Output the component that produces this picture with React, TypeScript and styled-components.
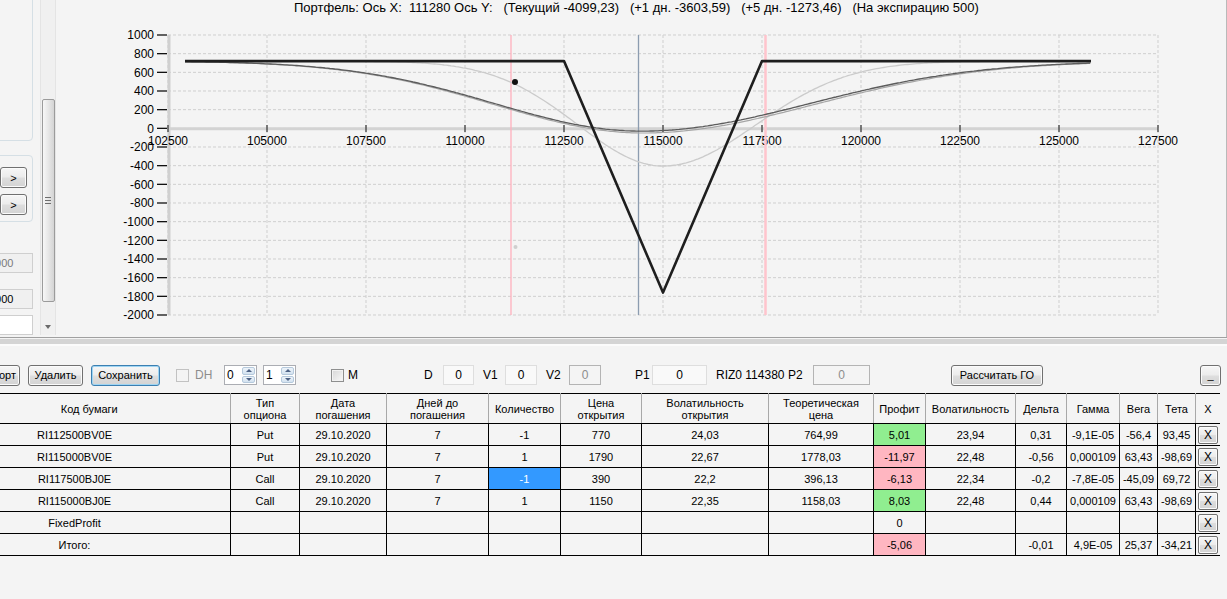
import styled, { createGlobalStyle } from "styled-components";

const GlobalStyle = createGlobalStyle`
	html, body {
		margin: 0;
		padding: 0;
		background: #f4f4f4;
	}
	body {
		font-family: "Liberation Sans", Arial, sans-serif;
		font-size: 11px;
		color: #000;
	}
	* { box-sizing: border-box; }
`;

const Window = styled.div`
	width: 1227px;
	height: 599px;
	overflow: hidden;
	display: flex;
	flex-direction: column;
	background: #f4f4f4;
`;

const TopPane = styled.div`
	display: flex;
	height: 337px;
	flex: none;
`;

const LeftPanel = styled.div`
	width: 40px;
	flex: none;
	overflow: hidden;
`;

const LeftInner = styled.div`
	width: 158px;
	margin-left: -125px;
	display: flex;
	flex-direction: column;
	align-items: flex-end;
`;

const GroupBox = styled.div<{ $top: number; $h: number }>`
	width: 100%;
	margin-top: ${(p) => p.$top}px;
	height: ${(p) => p.$h}px;
	border: 1px solid #d5dfe5;
	border-radius: 4px;
	display: flex;
	flex-direction: column;
	align-items: flex-end;
	gap: 6px;
	padding: 11px 5px 0 0;
`;

const TextBox = styled.div<{ $top: number; $bg: string; $fg: string }>`
	margin-top: ${(p) => p.$top}px;
	width: 60px;
	height: 20px;
	border: 1px solid #cfcfcf;
	background: ${(p) => p.$bg};
	color: ${(p) => p.$fg};
	font-size: 11px;
	line-height: 18px;
	padding-left: 15px;
`;

const VScroll = styled.div`
	width: 16px;
	flex: none;
	height: 335px;
	background: #f0f0f0;
	border-left: 1px solid #e4e4e4;
	border-right: 1px solid #e4e4e4;
	display: flex;
	flex-direction: column;
	align-items: center;
`;

const Thumb = styled.div`
	margin-top: 99px;
	width: 13px;
	height: 203px;
	border: 1px solid #9b9b9b;
	border-radius: 2px;
	background: linear-gradient(to right, #f7f7f7, #e6e6e6 50%, #d4d4d4);
	display: flex;
	align-items: center;
	justify-content: center;
`;

const Grip = styled.div`
	width: 6px;
	height: 7px;
	background: repeating-linear-gradient(#6e6e6e 0 1px, transparent 1px 3px);
`;

const ArrowDown = styled.div`
	margin-top: auto;
	margin-bottom: 6px;
	width: 0;
	height: 0;
	border-left: 3px solid transparent;
	border-right: 3px solid transparent;
	border-top: 4px solid #6a6a6a;
`;

const ChartArea = styled.div`
	flex: 1;
	min-width: 0;
	border-right: 1px solid #b9b9b9;
`;

const ChartSvg = styled.svg`
	display: block;
	font-family: "Liberation Sans", Arial, sans-serif;
`;

const PreText = styled.text`
	white-space: pre;
`;

const Splitter = styled.div`
	flex: none;
	height: 10px;
	border-top: 1px solid #a0a0a0;
	background: linear-gradient(#f4f4f4 0 1px, #d4d4d4 1px 6px, #fbfbfb 6px 8px, #f4f4f4 8px);
`;

const BottomPane = styled.div`
	flex: 1;
	display: flex;
	flex-direction: column;
`;

const Toolbar = styled.div`
	display: flex;
	align-items: center;
	height: 22px;
	margin-top: 17px;
	flex: none;
`;

const Btn = styled.button<{ $ml?: number; $w: number; $focused?: boolean; $right?: boolean }>`
	margin-left: ${(p) => p.$ml ?? 0}px;
	width: ${(p) => p.$w}px;
	height: 21px;
	flex: none;
	padding: 0 3px;
	text-align: ${(p) => (p.$right ? "right" : "center")};
	font: 11px "Liberation Sans", Arial, sans-serif;
	color: #000;
	border: 1px solid ${(p) => (p.$focused ? "#3c7fb1" : "#707070")};
	border-radius: 3px;
	background: linear-gradient(#f6f6f6 0%, #ececec 48%, #dedede 52%, #d3d3d3 100%);
	box-shadow: inset 0 0 0 1px ${(p) => (p.$focused ? "#9fd5f3" : "#fbfbfb")};
`;

const Check = styled.div<{ $ml?: number; $disabled?: boolean }>`
	margin-left: ${(p) => p.$ml ?? 0}px;
	width: 13px;
	height: 13px;
	flex: none;
	border: 1px solid ${(p) => (p.$disabled ? "#c2c2c2" : "#8e8f8f")};
	background: ${(p) =>
		p.$disabled ? "#f4f4f4" : "linear-gradient(135deg, #d6d6d6, #f9f9f9)"};
	box-shadow: inset 0 0 0 1px ${(p) => (p.$disabled ? "#f4f4f4" : "#f2f2f2")};
`;

const Label = styled.span<{ $ml?: number; $w: number; $disabled?: boolean }>`
	margin-left: ${(p) => p.$ml ?? 0}px;
	width: ${(p) => p.$w}px;
	flex: none;
	font-size: 12px;
	white-space: nowrap;
	color: ${(p) => (p.$disabled ? "#8d8d8d" : "#000")};
`;

const Field = styled.div<{ $ml?: number; $w: number; $disabled?: boolean }>`
	margin-left: ${(p) => p.$ml ?? 0}px;
	width: ${(p) => p.$w}px;
	height: 20px;
	flex: none;
	border: 1px solid ${(p) => (p.$disabled ? "#b4b4b4" : "#dedede")};
	background: ${(p) => (p.$disabled ? "#f4f4f4" : "#f9f9f9")};
	color: ${(p) => (p.$disabled ? "#8d8d8d" : "#000")};
	font-size: 12px;
	line-height: 18px;
	text-align: center;
`;

const Spin = styled.div<{ $ml?: number }>`
	margin-left: ${(p) => p.$ml ?? 0}px;
	width: 33px;
	height: 20px;
	flex: none;
	display: flex;
	border: 1px solid #abadb3;
	background: #fff;
`;

const SpinValue = styled.span`
	flex: 1;
	padding-left: 2px;
	font-size: 12px;
	line-height: 18px;
`;

const SpinButtons = styled.div`
	width: 15px;
	display: flex;
	flex-direction: column;
	gap: 1px;
	padding: 1px;
`;

const SpinBtn = styled.div<{ $up?: boolean }>`
	flex: 1;
	border: 1px solid #b5c9dc;
	border-radius: 2px;
	background: linear-gradient(#eef4fa, #d3e2f0);
	display: flex;
	align-items: center;
	justify-content: center;
	&::after {
		content: "";
		border-left: 3px solid transparent;
		border-right: 3px solid transparent;
		${(p) => (p.$up ? "border-bottom" : "border-top")}: 3px solid #4e6386;
	}
`;

const GridWrap = styled.div`
	margin-top: 7px;
	width: 1220px;
	overflow: hidden;
	flex: none;
`;

const Table = styled.table`
	margin-left: -82px;
	width: 1302px;
	border-collapse: collapse;
	table-layout: fixed;
	border-top: 1px solid #000;
	border-right: 1px solid #000;
`;

const HeadCell = styled.th<{ $pl?: number }>`
	height: 30px;
	padding: 0 0 0 ${(p) => p.$pl ?? 0}px;
	font-weight: normal;
	font-size: 11px;
	line-height: 12px;
	text-align: center;
	background: #f4f4f4;
	border-right: 1px solid #a8a8a8;
	border-bottom: 1px solid #000;
	&:last-child { border-right: none; }
`;

const Cell = styled.td<{ $bg?: string; $fg?: string }>`
	height: 22px;
	padding: 0 1px;
	font-size: 11px;
	text-align: center;
	white-space: nowrap;
	overflow: hidden;
	border: 1px solid #000;
	background: ${(p) => p.$bg ?? "#f4f4f4"};
	color: ${(p) => p.$fg ?? "#000"};
`;

const RemoveBtn = styled.button`
	display: block;
	margin: 0 auto;
	width: 20px;
	height: 18px;
	padding: 0;
	font: 12px "Liberation Sans", Arial, sans-serif;
	color: #000;
	border: 1px solid #707070;
	border-radius: 2px;
	background: linear-gradient(#f6f6f6, #ececec 48%, #dedede 52%, #d3d3d3);
	box-shadow: inset 0 0 0 1px #fbfbfb;
`;

// --- chart geometry (page coordinates) ---
const sx = (s: number) => 168 + ((s - 102500) * 99) / 2500;
const sy = (v: number) => 128.33 - (v * 280) / 3000;

const bell = (c: number, amp: number, sl: number, sr: number) => (s: number) => {
	const d = s - c;
	const sg = d < 0 ? sl : sr;
	return 720 - amp * Math.exp(-(d * d) / (2 * sg * sg));
};

const curve = (f: (s: number) => number) => {
	let d = "";
	for (let s = 102929; s <= 125808; s += 60) {
		d += (d ? "L" : "M") + sx(s).toFixed(1) + "," + sy(f(s)).toFixed(1);
	}
	return d;
};

const payoff = [
	[102929, 720],
	[112500, 720],
	[115000, -1760],
	[117500, 720],
	[125808, 720],
]
	.map(([s, v], i) => (i ? "L" : "M") + sx(s).toFixed(1) + "," + sy(v).toFixed(1))
	.join("");

const yTicks = Array.from({ length: 16 }, (_, i) => 1000 - i * 200);
const xTicks = Array.from({ length: 11 }, (_, i) => 102500 + i * 2500);

const title =
	"Портфель: Ось X:  111280 Ось Y:   (Текущий -4099,23)   (+1 дн. -3603,59)   (+5 дн. -1273,46)   (На экспирацию 500)";

function Chart() {
	return (
		<ChartSvg width={1170} height={337} viewBox="56 0 1170 337">
			<PreText x={294} y={12} fontSize={13} fill="#000">
				{title}
			</PreText>
			{yTicks.map((v) => (
				<line key={"gy" + v} x1={168} x2={1158} y1={sy(v)} y2={sy(v)} stroke="#cfcfcf" strokeDasharray="3,2" />
			))}
			{xTicks.map((s) => (
				<line key={"gx" + s} x1={sx(s)} x2={sx(s)} y1={sy(1000)} y2={sy(-2000)} stroke="#cfcfcf" strokeDasharray="3,2" />
			))}
			<line x1={169} x2={169} y1={sy(1000)} y2={sy(-2000)} stroke="#d0d0d0" strokeWidth={3} />
			<line x1={168} x2={1158} y1={128.8} y2={128.8} stroke="#d3d3d3" strokeWidth={3} />
			{yTicks.map((v) => (
				<g key={"ly" + v}>
					<line x1={157} x2={167} y1={sy(v)} y2={sy(v)} stroke="#111" strokeWidth={1.3} />
					<text x={154} y={sy(v) + 4.5} fontSize={12} textAnchor="end" fill="#000">
						{v}
					</text>
				</g>
			))}
			{xTicks.map((s) => (
				<g key={"lx" + s}>
					<line x1={sx(s)} x2={sx(s)} y1={125} y2={132} stroke="#111" />
					<text x={sx(s)} y={145} fontSize={12} textAnchor="middle" fill="#000">
						{s}
					</text>
				</g>
			))}
			<line x1={511} x2={511} y1={sy(1000)} y2={sy(-2000)} stroke="#ffb0bd" strokeWidth={1.3} />
			<line x1={765.5} x2={765.5} y1={sy(1000)} y2={sy(-2000)} stroke="#ffc4cd" strokeWidth={2.5} />
			<line x1={638.5} x2={638.5} y1={sy(1000)} y2={sy(-2000)} stroke="#8c9cb0" strokeWidth={1.3} />
			<path d={curve(bell(115000, 1124, 2150, 2350))} fill="none" stroke="#cbcbcb" strokeWidth={1.3} />
			<path d={curve(bell(114500, 770, 3750, 4300))} fill="none" stroke="#a6a6a6" strokeWidth={1.2} />
			<path d={curve(bell(114450, 750, 3700, 4250))} fill="none" stroke="#5c5c5c" strokeWidth={1.3} />
			<path d={payoff} fill="none" stroke="#1e1e1e" strokeWidth={2.6} strokeLinejoin="round" />
			<circle cx={515} cy={82} r={3} fill="#111" />
			<circle cx={515.5} cy={247} r={2} fill="#cfcfcf" />
		</ChartSvg>
	);
}

type Row = {
	code: string;
	type?: string;
	date?: string;
	days?: string;
	qty?: string;
	sel?: boolean;
	price?: string;
	vol0?: string;
	theo?: string;
	profit: string;
	pc?: "g" | "r";
	vol?: string;
	delta?: string;
	gamma?: string;
	vega?: string;
	theta?: string;
};

const rows: Row[] = [
	{ code: "RI112500BV0E", type: "Put", date: "29.10.2020", days: "7", qty: "-1", price: "770", vol0: "24,03", theo: "764,99", profit: "5,01", pc: "g", vol: "23,94", delta: "0,31", gamma: "-9,1E-05", vega: "-56,4", theta: "93,45" },
	{ code: "RI115000BV0E", type: "Put", date: "29.10.2020", days: "7", qty: "1", price: "1790", vol0: "22,67", theo: "1778,03", profit: "-11,97", pc: "r", vol: "22,48", delta: "-0,56", gamma: "0,000109", vega: "63,43", theta: "-98,69" },
	{ code: "RI117500BJ0E", type: "Call", date: "29.10.2020", days: "7", qty: "-1", sel: true, price: "390", vol0: "22,2", theo: "396,13", profit: "-6,13", pc: "r", vol: "22,34", delta: "-0,2", gamma: "-7,8E-05", vega: "-45,09", theta: "69,72" },
	{ code: "RI115000BJ0E", type: "Call", date: "29.10.2020", days: "7", qty: "1", price: "1150", vol0: "22,35", theo: "1158,03", profit: "8,03", pc: "g", vol: "22,48", delta: "0,44", gamma: "0,000109", vega: "63,43", theta: "-98,69" },
	{ code: "FixedProfit", profit: "0" },
	{ code: "Итого:", profit: "-5,06", pc: "r", delta: "-0,01", gamma: "4,9E-05", vega: "25,37", theta: "-34,21" },
];

const cols = [312, 69, 87, 102, 72, 81, 127, 105, 52, 90, 51, 53, 38, 38, 25];

const profitBg = { g: "#90ee90", r: "#ffb6c1" };

export default function App() {
	return (
		<Window>
			<GlobalStyle />
			<TopPane>
				<LeftPanel>
					<LeftInner>
						<GroupBox $top={-20} $h={161} />
						<GroupBox $top={14} $h={67}>
							<Btn $w={27}>&gt;</Btn>
							<Btn $w={27}>&gt;</Btn>
						</GroupBox>
						<TextBox $top={31} $bg="#f0f0f0" $fg="#7a7a7a">
							1000
						</TextBox>
						<TextBox $top={16} $bg="#f0f0f0" $fg="#000">
							1000
						</TextBox>
						<TextBox $top={6} $bg="#fff" $fg="#000" />
					</LeftInner>
				</LeftPanel>
				<VScroll>
					<Thumb>
						<Grip />
					</Thumb>
					<ArrowDown />
				</VScroll>
				<ChartArea>
					<Chart />
				</ChartArea>
			</TopPane>
			<Splitter />
			<BottomPane>
				<Toolbar>
					<Btn $ml={-40} $w={60} $right>
						Экспорт
					</Btn>
					<Btn $ml={8} $w={55}>
						Удалить
					</Btn>
					<Btn $ml={8} $w={69} $focused>
						Сохранить
					</Btn>
					<Check $ml={16} $disabled />
					<Label $ml={6} $w={29} $disabled>
						DH
					</Label>
					<Spin>
						<SpinValue>0</SpinValue>
						<SpinButtons>
							<SpinBtn $up />
							<SpinBtn />
						</SpinButtons>
					</Spin>
					<Spin $ml={6}>
						<SpinValue>1</SpinValue>
						<SpinButtons>
							<SpinBtn $up />
							<SpinBtn />
						</SpinButtons>
					</Spin>
					<Check $ml={35} />
					<Label $ml={4} $w={76}>
						M
					</Label>
					<Label $w={19}>D</Label>
					<Field $w={31}>0</Field>
					<Label $ml={9} $w={22}>
						V1
					</Label>
					<Field $w={32}>0</Field>
					<Label $ml={9} $w={23}>
						V2
					</Label>
					<Field $w={32} $disabled>
						0
					</Field>
					<Label $ml={34} $w={17}>
						P1
					</Label>
					<Field $w={55}>0</Field>
					<Label $ml={9} $w={72}>
						RIZ0 114380
					</Label>
					<Label $w={25}>P2</Label>
					<Field $w={57} $disabled>
						0
					</Field>
					<Btn $ml={81} $w={92}>
						Рассчитать ГО
					</Btn>
					<Btn $ml={157} $w={21}>
						_
					</Btn>
				</Toolbar>
				<GridWrap>
					<Table>
						<colgroup>
							{cols.map((w, i) => (
								<col key={i} style={{ width: w }} />
							))}
						</colgroup>
						<thead>
							<tr>
								<HeadCell $pl={30}>Код бумаги</HeadCell>
								<HeadCell>Тип<br />опциона</HeadCell>
								<HeadCell>Дата<br />погашения</HeadCell>
								<HeadCell>Дней до<br />погашения</HeadCell>
								<HeadCell>Количество</HeadCell>
								<HeadCell>Цена<br />открытия</HeadCell>
								<HeadCell>Волатильность<br />открытия</HeadCell>
								<HeadCell>Теоретическая<br />цена</HeadCell>
								<HeadCell>Профит</HeadCell>
								<HeadCell>Волатильность</HeadCell>
								<HeadCell>Дельта</HeadCell>
								<HeadCell>Гамма</HeadCell>
								<HeadCell>Вега</HeadCell>
								<HeadCell>Тета</HeadCell>
								<HeadCell>X</HeadCell>
							</tr>
						</thead>
						<tbody>
							{rows.map((r) => (
								<tr key={r.code}>
									<Cell>{r.code}</Cell>
									<Cell>{r.type}</Cell>
									<Cell>{r.date}</Cell>
									<Cell>{r.days}</Cell>
									<Cell $bg={r.sel ? "#3399ff" : undefined} $fg={r.sel ? "#fff" : undefined}>
										{r.qty}
									</Cell>
									<Cell>{r.price}</Cell>
									<Cell>{r.vol0}</Cell>
									<Cell>{r.theo}</Cell>
									<Cell $bg={r.pc ? profitBg[r.pc] : undefined}>{r.profit}</Cell>
									<Cell>{r.vol}</Cell>
									<Cell>{r.delta}</Cell>
									<Cell>{r.gamma}</Cell>
									<Cell>{r.vega}</Cell>
									<Cell>{r.theta}</Cell>
									<Cell>
										<RemoveBtn>X</RemoveBtn>
									</Cell>
								</tr>
							))}
						</tbody>
					</Table>
				</GridWrap>
			</BottomPane>
		</Window>
	);
}
